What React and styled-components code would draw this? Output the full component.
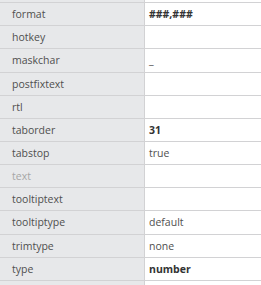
import React from 'react'
import styled, { createGlobalStyle } from 'styled-components'

const GlobalStyle = createGlobalStyle`
  html, body {
    margin: 0;
    padding: 0;
    background: #ffffff;
  }
`

const Viewport = styled.div`
  width: 261px;
  height: 285px;
  overflow: hidden;
  font-family: 'Open Sans', 'Liberation Sans', sans-serif;
  font-size: 10.5px;
  color: #444444;
`

const Grid = styled.div`
  margin-top: -20px;
  display: flex;
  flex-direction: column;
`

const Row = styled.div`
  display: grid;
  grid-template-columns: 145px 1fr;
  height: 23.15px;
  box-sizing: border-box;
  border-bottom: 1px solid #d2d2d4;
`

const Name = styled.div`
  background: #e7e8ea;
  border-right: 1px solid #d2d2d4;
  padding-left: 12px;
  display: flex;
  align-items: center;
  color: ${(p) => (p.$disabled ? '#a6a6a6' : '#4f4f4f')};
`

const Value = styled.div`
  background: #ffffff;
  padding-left: 4px;
  display: flex;
  align-items: center;
  font-weight: ${(p) => (p.$bold ? 700 : 400)};
  color: ${(p) => (p.$bold ? '#333333' : '#4f4f4f')};
`

const rows = [
  { name: '', value: '' },
  { name: 'format', value: '###,###', bold: true },
  { name: 'hotkey', value: '' },
  { name: 'maskchar', value: '_' },
  { name: 'postfixtext', value: '' },
  { name: 'rtl', value: '' },
  { name: 'taborder', value: '31', bold: true },
  { name: 'tabstop', value: 'true' },
  { name: 'text', value: '', disabled: true },
  { name: 'tooltiptext', value: '' },
  { name: 'tooltiptype', value: 'default' },
  { name: 'trimtype', value: 'none' },
  { name: 'type', value: 'number', bold: true },
  { name: '', value: '' },
]

export default function App() {
  return (
    <>
      <GlobalStyle />
      <Viewport>
        <Grid>
          {rows.map((r, i) => (
            <Row key={i}>
              <Name $disabled={r.disabled}>{r.name}</Name>
              <Value $bold={r.bold}>{r.value}</Value>
            </Row>
          ))}
        </Grid>
      </Viewport>
    </>
  )
}
